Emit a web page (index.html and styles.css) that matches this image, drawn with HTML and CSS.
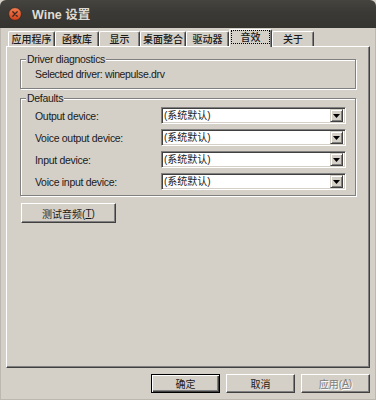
FILE: index.html
```html
<!DOCTYPE html>
<html>
<head>
<meta charset="utf-8">
<link rel="stylesheet" href="styles.css">
</head>
<body>
<div class="window">
  <div class="titlebar">
    <span class="close">
      <svg width="14" height="14" viewBox="0 0 14 14">
        <defs>
          <linearGradient id="cg" x1="0" y1="0" x2="0" y2="1">
            <stop offset="0" stop-color="#f47d4f"/>
            <stop offset="1" stop-color="#d2401a"/>
          </linearGradient>
        </defs>
        <circle cx="7" cy="7" r="6.4" fill="url(#cg)" stroke="#2a2925" stroke-width="0.8"/>
        <path d="M4.8 4.8 L9.2 9.2 M9.2 4.8 L4.8 9.2" stroke="#3a2a22" stroke-width="1.3" stroke-linecap="round"/>
      </svg>
    </span>
    <span class="title">Wine 设置</span>
  </div>
  <div class="client">
    <div class="tabs">
      <div class="tab t1">应用程序</div>
      <div class="tab t2">函数库</div>
      <div class="tab t3">显示</div>
      <div class="tab t4">桌面整合</div>
      <div class="tab t5">驱动器</div>
      <div class="tab t6 selected"><span class="focus">音效</span></div>
      <div class="tab t7">关于</div>
    </div>
    <div class="panel">
      <div class="group diag">
        <div class="legend">Driver diagnostics</div>
        <div class="driver">Selected driver: winepulse.drv</div>
      </div>
      <div class="group defaults">
        <div class="legend">Defaults</div>
        <div class="rows">
          <div class="label">Output device:</div>
          <div class="combo"><span class="value">(系统默认)</span><span class="arrow"><svg width="7" height="4" viewBox="0 0 7 4"><path d="M0 0 H7 L3.5 4 Z" fill="#000"/></svg></span></div>
          <div class="label">Voice output device:</div>
          <div class="combo"><span class="value">(系统默认)</span><span class="arrow"><svg width="7" height="4" viewBox="0 0 7 4"><path d="M0 0 H7 L3.5 4 Z" fill="#000"/></svg></span></div>
          <div class="label">Input device:</div>
          <div class="combo"><span class="value">(系统默认)</span><span class="arrow"><svg width="7" height="4" viewBox="0 0 7 4"><path d="M0 0 H7 L3.5 4 Z" fill="#000"/></svg></span></div>
          <div class="label">Voice input device:</div>
          <div class="combo"><span class="value">(系统默认)</span><span class="arrow"><svg width="7" height="4" viewBox="0 0 7 4"><path d="M0 0 H7 L3.5 4 Z" fill="#000"/></svg></span></div>
        </div>
      </div>
      <div class="btn test">测试音频(<u>T</u>)</div>
    </div>
    <div class="footer">
      <div class="btn default">确定</div>
      <div class="btn">取消</div>
      <div class="btn disabled">应用(<u>A</u>)</div>
    </div>
  </div>
</div>
</body>
</html>
```
FILE: styles.css
```css
html, body {
  margin: 0;
  padding: 0;
  background: #d4d0c8;
}
body {
  width: 376px;
  height: 400px;
  overflow: hidden;
  font-family: "Liberation Sans", "Noto Sans CJK SC", sans-serif;
  font-size: 10.5px;
  color: #1a1a1a;
}
.window {
  width: 376px;
  height: 400px;
  display: flex;
  flex-direction: column;
  border-radius: 6px 6px 0 0;
  overflow: hidden;
  background: #d4d0c8;
}
.titlebar {
  height: 28px;
  flex: none;
  display: flex;
  align-items: center;
  padding-left: 8px;
  background: linear-gradient(#45443f, #3b3a36 40%, #35342f);
  box-sizing: border-box;
}
.close {
  width: 14px;
  height: 14px;
  display: flex;
  margin-top: -1px;
}
.title {
  margin-left: 10px;
  margin-top: -1px;
  color: #dfdbd2;
  font-family: "Liberation Sans", "Noto Sans CJK SC", sans-serif;
  font-weight: bold;
  font-size: 12.5px;
}
.client {
  flex: 1;
  display: flex;
  flex-direction: column;
  border: 1px solid #bcb8b0;
  border-top: none;
  padding-top: 1px;
}
.tabs {
  display: flex;
  height: 17px;
  margin-left: 7px;
  font-family: "Noto Sans CJK SC", sans-serif;
  font-size: 10px;
  font-weight: 500;
}
.tab {
  box-sizing: border-box;
  height: 15px;
  margin-top: 2px;
  border-top: 1px solid #fff;
  border-left: 1px solid #fff;
  border-right: 1px solid #404040;
  box-shadow: inset -1px 0 0 #808080;
  border-radius: 2px 2px 0 0;
  display: flex;
  align-items: center;
  justify-content: center;
  line-height: 12px;
}
.t1 { width: 47px; }
.t2 { width: 44px; }
.t3 { width: 41px; }
.t4 { width: 46px; }
.t5 { width: 43px; }
.t6 { width: 43px; }
.t7 { width: 42px; }
.tab.selected {
  height: 18px;
  margin-top: 0;
  margin-bottom: -1px;
  position: relative;
  z-index: 1;
  background: #d4d0c8;
  align-items: flex-start;
  padding-top: 1px;
}
.focus {
  display: block;
  width: 37px;
  height: 12px;
  text-align: center;
  outline: 1px dotted #000;
  line-height: 12px;
}
.panel {
  box-sizing: border-box;
  width: 364px;
  height: 322px;
  margin-left: 5px;
  border-top: 1px solid #fff;
  border-left: 1px solid #fff;
  border-right: 1px solid #404040;
  border-bottom: 1px solid #404040;
  box-shadow: inset -1px -1px 0 #808080;
  padding: 0 13px;
  display: flex;
  flex-direction: column;
  align-items: stretch;
}
.group {
  box-sizing: border-box;
  border: 1px solid #808080;
  box-shadow: inset 1px 1px 0 #fff, 1px 1px 0 #fff;
}
.diag {
  margin-top: 12px;
  height: 30px;
}
.legend {
  width: fit-content;
  margin: -7px 0 0 5px;
  padding: 0 1px;
  line-height: 13px;
  background: #d4d0c8;
  letter-spacing: -0.3px;
}
.driver {
  margin: 2px 0 0 14px;
  line-height: 13px;
  letter-spacing: -0.35px;
}
.defaults {
  margin-top: 9px;
  height: 98px;
}
.rows {
  display: grid;
  grid-template-columns: 126px 185px;
  grid-auto-rows: 17px;
  row-gap: 5px;
  margin: 2px 0 0 14px;
  align-items: center;
}
.label {
  letter-spacing: -0.3px;
}
.combo {
  box-sizing: border-box;
  height: 17px;
  background: #fff;
  border-top: 1px solid #808080;
  border-left: 1px solid #808080;
  border-right: 1px solid #fff;
  border-bottom: 1px solid #fff;
  box-shadow: inset 1px 1px 0 #404040, inset -1px -1px 0 #d4d0c8;
  display: flex;
  align-items: center;
  justify-content: space-between;
  padding: 1px 2px 1px 2px;
}
.value {
  font-family: "Liberation Sans", "Noto Sans CJK SC", sans-serif;
  font-size: 10px;
  line-height: 12px;
}
.arrow {
  box-sizing: border-box;
  width: 13px;
  height: 13px;
  background: #d4d0c8;
  border-top: 1px solid #d4d0c8;
  border-left: 1px solid #d4d0c8;
  border-right: 1px solid #404040;
  border-bottom: 1px solid #404040;
  box-shadow: inset 1px 1px 0 #fff, inset -1px -1px 0 #808080;
  display: flex;
  align-items: center;
  justify-content: center;
}
.btn {
  box-sizing: border-box;
  height: 19px;
  border-top: 1px solid #fff;
  border-left: 1px solid #fff;
  border-right: 1px solid #404040;
  border-bottom: 1px solid #404040;
  box-shadow: inset -1px -1px 0 #808080;
  display: flex;
  align-items: center;
  justify-content: center;
  font-family: "Liberation Sans", "Noto Sans CJK SC", sans-serif;
  font-size: 10px;
}
.btn u {
  text-underline-offset: 1px;
}
.test {
  width: 95px;
  height: 20px;
  margin: 7px 0 0 1px;
}
.footer {
  display: flex;
  justify-content: flex-end;
  gap: 6px;
  padding-right: 5px;
  margin-top: 6px;
}
.footer .btn {
  width: 69px;
}
.btn.default {
  border: 1px solid #000;
  box-shadow: inset 1px 1px 0 #fff, inset -1px -1px 0 #404040, inset -2px -2px 0 #808080;
}
.btn.disabled {
  color: #808080;
  text-shadow: 1px 1px 0 #fff;
}
```
